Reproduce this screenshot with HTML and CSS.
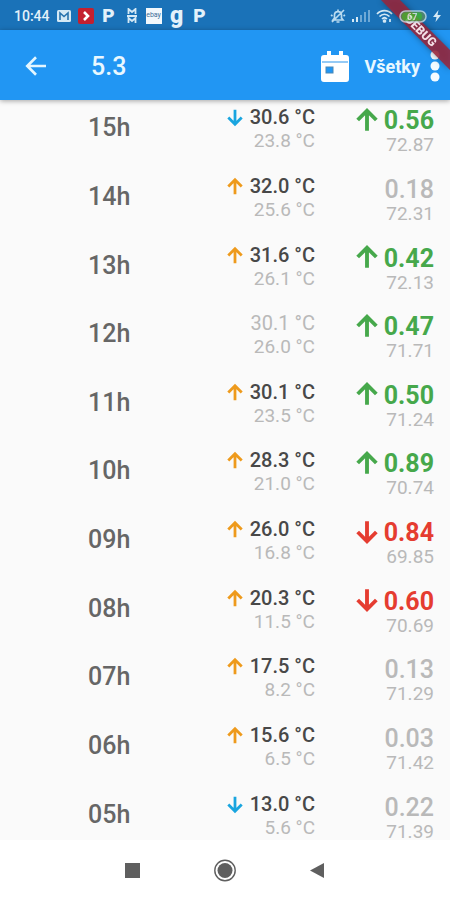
FILE: index.html
```html
<!DOCTYPE html>
<html lang="sk">
<head>
<meta charset="utf-8">
<meta name="viewport" content="width=device-width, initial-scale=1">
<title>5.3</title>
<link rel="stylesheet" href="styles.css">
</head>
<body>
<svg class="defs" aria-hidden="true">
  <symbol id="up" viewBox="0 0 24 24"><path d="M12 20V5.500M5 12l7-7 7 7" fill="none" stroke="currentColor" stroke-width="2.900"/></symbol>
  <symbol id="down" viewBox="0 0 24 24"><path d="M12 4v14.500M5 12l7 7 7-7" fill="none" stroke="currentColor" stroke-width="2.900"/></symbol>
</svg>

<div class="status">
  <div class="notices">
    <time class="clock">10:44</time>
    <svg width="14" height="12" viewBox="0 0 14 12"><rect width="14" height="12" rx="1.500" fill="#d5e9f5"/><path d="M3 10V3l4 3.500L11 3v7" fill="none" stroke="#2873ad" stroke-width="1.600"/></svg>
    <svg width="16" height="16" viewBox="0 0 16 16"><rect width="16" height="16" rx="2" fill="#c4202f"/><path d="M6 4l4 4-4 4" fill="none" stroke="#fff" stroke-width="2.600"/></svg>
    <span class="letter">P</span>
    <svg width="10" height="16" viewBox="0 0 10 16" fill="none" stroke="#d5e9f5" stroke-width="1.800"><path d="M1.500 6V1L5 4l3.500-3v5M1.500 15v-5L5 13l3.500-3v5M0 8h10"/></svg>
    <span class="shop">ebay</span>
    <span class="letter g">g</span>
    <span class="letter">P</span>
  </div>
  <div class="device">
    <svg width="16" height="16" viewBox="0 0 16 16" fill="none" stroke="#b9dbf0" stroke-width="1.700"><path d="M3 12h10l-1.500-2V7C11.500 2.500 4.500 2.500 4.500 7v3zM8 1.500v2M6.500 14h3M14 2L2 14M1 7l1.500 1M13.500 8l1.500-1"/></svg>
    <svg width="18" height="12" viewBox="0 0 18 12"><path d="M0 9h2v3H0zM4 7h2v5H4z" fill="#d5e9f5"/><path d="M8 5h2v7H8zM12 2h2v10h-2zM16 0h2v12h-2z" fill="#6fa9d6"/></svg>
    <svg width="17" height="14" viewBox="0 0 17 14" fill="none" stroke="#d5e9f5" stroke-width="1.700"><path d="M1 5c4-4.500 11-4.500 15 0M3.500 7.500c3-3 7-3 10 0M6 10c1.500-1.500 3.500-1.500 5 0"/><circle cx="8.500" cy="12" r="1" fill="#d5e9f5"/><path d="M14 10v3"/></svg>
    <svg class="battery" width="28" height="13" viewBox="0 0 28 13"><rect x="1" y="1" width="26" height="11" rx="5.500" fill="#5b8a5e" stroke="#c8dfe8" stroke-width="1.500"/><rect x="3" y="2.500" width="20" height="8" rx="4" fill="#45b82e"/><text x="8" y="10" font-family="Roboto" font-size="9" font-weight="700" fill="#e8f6e8">67</text></svg>
    <svg width="8" height="12" viewBox="0 0 8 12"><path d="M5.500 0L0 7h3.500L2.500 12 8 5H4.500z" fill="#d5e9f5"/></svg>
  </div>
</div>

<header class="bar">
  <button class="back" aria-label="Späť"><svg width="30" height="30" viewBox="0 0 24 24"><path d="M20 12H5.500M12 5l-7 7 7 7" fill="none" stroke="#e3f6ff" stroke-width="2.100"/></svg></button>
  <h1>5.3</h1>
  <button class="date" aria-label="Dátum"><svg width="28" height="31" viewBox="0 0 28 31"><path d="M6 0h4v4h8V0h4v4h3a3 3 0 0 1 3 3v21a3 3 0 0 1-3 3H3a3 3 0 0 1-3-3V7a3 3 0 0 1 3-3h3z" fill="#fff"/><path d="M1 11h26" stroke="#72b9f2" stroke-width="1.500"/><rect x="5" y="16" width="7" height="6" fill="#2196f3" stroke="#4a87b5"/></svg></button>
  <button class="all">Všetky</button>
  <button class="more" aria-label="Viac"><svg width="10" height="32" viewBox="0 0 10 32" fill="#f4fbff"><circle cx="5" cy="5" r="4.500"/><circle cx="5" cy="16" r="4.500"/><circle cx="5" cy="27" r="4.500"/></svg></button>
</header>

<main>
<table>
<tbody>
<tr><th scope="row">15h</th><td class="temp"><div class="now"><svg class="cold"><use href="#down"/></svg>30.6 °C</div><div class="sub">23.8 °C</div></td><td class="gain"><div class="now green"><svg><use href="#up"/></svg>0.56</div><div class="sub">72.87</div></td></tr>
<tr><th scope="row">14h</th><td class="temp"><div class="now"><svg class="warm"><use href="#up"/></svg>32.0 °C</div><div class="sub">25.6 °C</div></td><td class="gain"><div class="now flat">0.18</div><div class="sub">72.31</div></td></tr>
<tr><th scope="row">13h</th><td class="temp"><div class="now"><svg class="warm"><use href="#up"/></svg>31.6 °C</div><div class="sub">26.1 °C</div></td><td class="gain"><div class="now green"><svg><use href="#up"/></svg>0.42</div><div class="sub">72.13</div></td></tr>
<tr><th scope="row">12h</th><td class="temp"><div class="now flat">30.1 °C</div><div class="sub">26.0 °C</div></td><td class="gain"><div class="now green"><svg><use href="#up"/></svg>0.47</div><div class="sub">71.71</div></td></tr>
<tr><th scope="row">11h</th><td class="temp"><div class="now"><svg class="warm"><use href="#up"/></svg>30.1 °C</div><div class="sub">23.5 °C</div></td><td class="gain"><div class="now green"><svg><use href="#up"/></svg>0.50</div><div class="sub">71.24</div></td></tr>
<tr><th scope="row">10h</th><td class="temp"><div class="now"><svg class="warm"><use href="#up"/></svg>28.3 °C</div><div class="sub">21.0 °C</div></td><td class="gain"><div class="now green"><svg><use href="#up"/></svg>0.89</div><div class="sub">70.74</div></td></tr>
<tr><th scope="row">09h</th><td class="temp"><div class="now"><svg class="warm"><use href="#up"/></svg>26.0 °C</div><div class="sub">16.8 °C</div></td><td class="gain"><div class="now red"><svg><use href="#down"/></svg>0.84</div><div class="sub">69.85</div></td></tr>
<tr><th scope="row">08h</th><td class="temp"><div class="now"><svg class="warm"><use href="#up"/></svg>20.3 °C</div><div class="sub">11.5 °C</div></td><td class="gain"><div class="now red"><svg><use href="#down"/></svg>0.60</div><div class="sub">70.69</div></td></tr>
<tr><th scope="row">07h</th><td class="temp"><div class="now"><svg class="warm"><use href="#up"/></svg>17.5 °C</div><div class="sub">8.2 °C</div></td><td class="gain"><div class="now flat">0.13</div><div class="sub">71.29</div></td></tr>
<tr><th scope="row">06h</th><td class="temp"><div class="now"><svg class="warm"><use href="#up"/></svg>15.6 °C</div><div class="sub">6.5 °C</div></td><td class="gain"><div class="now flat">0.03</div><div class="sub">71.42</div></td></tr>
<tr><th scope="row">05h</th><td class="temp"><div class="now"><svg class="cold"><use href="#down"/></svg>13.0 °C</div><div class="sub">5.6 °C</div></td><td class="gain"><div class="now flat">0.22</div><div class="sub">71.39</div></td></tr>
</tbody>
</table>
</main>

<nav>
  <button aria-label="Prehľad"><svg width="24" height="24" viewBox="0 0 24 24"><path d="M4 5h15v15H4z" fill="#5f5f5f"/></svg></button>
  <button aria-label="Domov"><svg width="24" height="24" viewBox="0 0 24 24"><circle cx="12" cy="12.500" r="10.200" fill="none" stroke="#5f5f5f" stroke-width="1.400"/><circle cx="12" cy="12.500" r="7.500" fill="#5f5f5f"/></svg></button>
  <button aria-label="Späť"><svg width="24" height="24" viewBox="0 0 24 24"><path d="M19 5v15L5 12.500z" fill="#5f5f5f"/></svg></button>
</nav>

<svg class="ribbon" width="80" height="80" viewBox="0 0 80 80" aria-hidden="true">
  <path d="M11 0h19l50 50v20z" fill="#9b2439" fill-opacity=".85"/>
  <text x="51" y="35" transform="rotate(45 51 31)" text-anchor="middle" font-family="Roboto" font-size="12" font-weight="900" fill="#f3dfe6">DEBUG</text>
</svg>
</body>
</html>
```
FILE: styles.css
```css
* { box-sizing: border-box; }
body {
  margin: 0;
  height: 100vh;
  display: flex;
  flex-direction: column;
  position: relative;
  overflow: hidden;
  font-family: Roboto, "Liberation Sans", sans-serif;
  background: #fafafa;
}
svg { display: block; flex: none; }
.defs { position: absolute; width: 0; height: 0; }
button {
  padding: 0;
  border: 0;
  background: none;
  color: inherit;
  font: inherit;
}

.status {
  height: 30px;
  flex: none;
  display: flex;
  align-items: center;
  justify-content: space-between;
  padding: 2px 9px 0 14px;
  background: #1a72b8;
  color: #e3f1fa;
}
.notices { display: flex; align-items: center; gap: 7px; }
.clock { font-size: 14px; font-weight: 500; }
.letter {
  width: 16px;
  font-size: 19px;
  line-height: 16px;
  font-weight: 900;
  text-align: center;
}
.notices svg + .letter { margin-right: 3px; }
.shop {
  width: 16px;
  height: 16px;
  margin-left: 2px;
  overflow: hidden;
  background: #f2f8fc;
  color: #3d7098;
  font-size: 7px;
  line-height: 15px;
  text-align: center;
}
.g { font-size: 23px; line-height: 12px; }
.device { display: flex; align-items: center; gap: 6px; }
.battery { position: relative; z-index: 2; opacity: .8; }

.bar {
  height: 70px;
  flex: none;
  display: flex;
  align-items: center;
  position: relative;
  padding: 2px 10px 0 21px;
  background: #2196f3;
  box-shadow: 0 1px 5px rgba(0, 0, 0, .35);
  color: #e9f8ff;
}
h1 {
  flex: 1;
  margin: 0 0 0 40px;
  font-size: 25px;
  font-weight: 500;
}
.all {
  margin: 0 10px 0 16px;
  font-size: 18px;
  font-weight: 700;
}

main {
  flex: 1;
  min-height: 0;
  overflow: hidden;
  display: flex;
  flex-direction: column;
}
table {
  flex: 1;
  display: flex;
  margin: -5px 0 -10px;
}
tbody {
  flex: 1;
  display: grid;
  grid-auto-rows: 1fr;
}
tr {
  display: grid;
  grid-template-columns: 1fr auto 119px;
  align-items: center;
  padding: 0 16px 0 88px;
}
th, td { padding: 0; text-align: right; }
th {
  padding-bottom: 2px;
  color: #666;
  font-size: 25px;
  line-height: 28px;
  font-weight: 500;
  text-align: left;
}
.now {
  display: flex;
  align-items: center;
  justify-content: flex-end;
  font-weight: 500;
}
.temp .now {
  gap: 3px;
  color: #484848;
  font-size: 20px;
  line-height: 23px;
}
.temp svg { width: 24px; height: 23px; }
.sub {
  color: #b9b9b9;
  font-size: 19px;
  line-height: 23px;
}
.gain { padding-top: 3px; }
.gain .now { font-size: 25px; line-height: 29px; }
.gain .sub { line-height: 20px; }
.gain .green, .gain .red { font-weight: 700; }
.gain svg { width: 32px; height: 32px; margin: -3px 1px -1px 0; }
.cold { color: #19a5df; }
.warm { color: #ee9a1c; }
.green { color: #46a84b; }
.red { color: #e53c30; }
.temp .flat { color: #b9b9b9; font-weight: 400; }
.gain .flat { color: #b9b9b9; }

nav {
  height: 60px;
  flex: none;
  display: flex;
  align-items: center;
  justify-content: center;
  gap: 68px;
  background: #fff;
}

.ribbon {
  position: absolute;
  top: 0;
  right: 0;
  z-index: 1;
  pointer-events: none;
  filter: drop-shadow(0 0 3px rgba(0, 0, 0, .4));
}
```
